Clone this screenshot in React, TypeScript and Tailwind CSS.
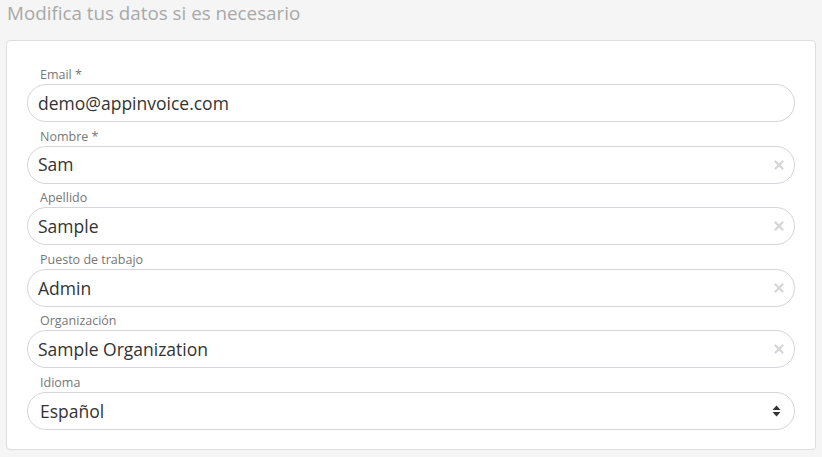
import { X } from "lucide-react";

const FIELDS = [
  { label: "Email *", value: "demo@appinvoice.com", clear: false },
  { label: "Nombre *", value: "Sam", clear: true },
  { label: "Apellido", value: "Sample", clear: true },
  { label: "Puesto de trabajo", value: "Admin", clear: true },
  { label: "Organización", value: "Sample Organization", clear: true },
];

export default function App() {
  return (
    <div
      className="w-[822px] h-[457px] bg-[#f5f5f5] overflow-hidden px-[6px]"
      style={{ fontFamily: "'Open Sans', 'Liberation Sans', sans-serif" }}
    >
      <div className="h-[28px] pl-px text-[18.8px] leading-[26px] text-[#a8a8a8]">
        Modifica tus datos si es necesario
      </div>
      <div className="mt-[12px] w-[810px] h-[410px] bg-white border border-[#dedede] rounded-[4px] pl-[20px] pr-[20px] pt-[26px]">
        {FIELDS.map((f) => (
          <div key={f.label}>
            <div className="h-[17px] pl-[13px] text-[12.5px] leading-[16px] text-[#777]">{f.label}</div>
            <div className="h-[38px] rounded-full border border-[#d4d6dc] flex items-center pl-[10px] pr-[8px]">
              <span className="flex-1 text-[17.5px] text-[#333]">{f.value}</span>
              {f.clear && <X className="w-[14px] h-[14px] text-[#d6d6d6]" strokeWidth={4} />}
            </div>
            <div className="h-[6.6px]" />
          </div>
        ))}
        <div>
          <div className="h-[17px] pl-[13px] text-[12.5px] leading-[16px] text-[#777]">Idioma</div>
          <div className="h-[38px] rounded-full border border-[#d4d6dc] flex items-center pl-[12px] pr-[10px]">
            <span className="flex-1 text-[17.5px] text-[#333]">Español</span>
            <svg width="9" height="12" viewBox="0 0 9 12" className="mr-[3px]">
              <path d="M4.5 0.5 L8.5 5 L0.5 5 Z" fill="#333" />
              <path d="M4.5 11.5 L8.5 7 L0.5 7 Z" fill="#333" />
            </svg>
          </div>
        </div>
      </div>
    </div>
  );
}
